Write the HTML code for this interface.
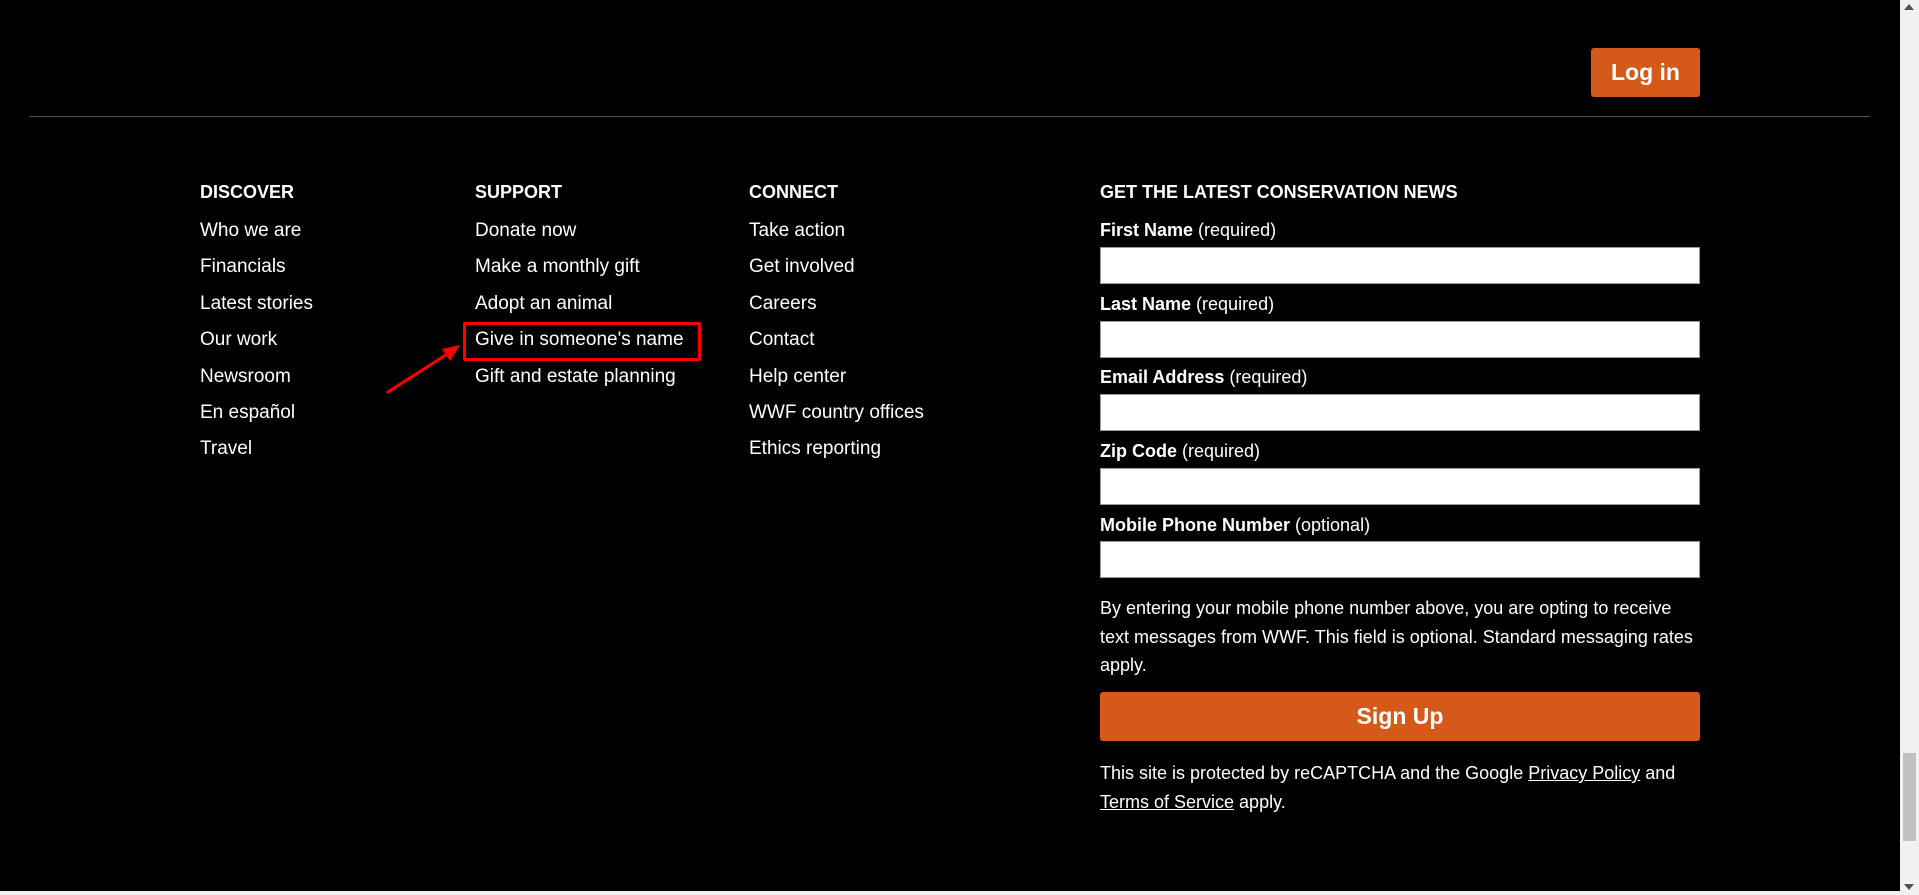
<!DOCTYPE html>
<html><head><meta charset="utf-8"><style>
*{margin:0;padding:0;box-sizing:border-box}
html,body{width:1919px;height:895px;overflow:hidden;background:#000;font-family:"Liberation Sans",Arial,sans-serif;color:#fff}
.a{position:absolute;white-space:nowrap}
.h{font-weight:bold;font-size:18px}
.l{font-size:19px}
.in{position:absolute;left:1100px;width:600px;background:#fff;border:1px solid #999}
.lab{font-size:18px}
.lab b{font-weight:bold}
</style></head><body>
<div class="a" style="left:1591px;top:48px;width:109px;height:49px;background:#d55a1a;border-radius:3px;font-weight:bold;font-size:23px;line-height:49px;text-align:center">Log in</div>
<div class="a" style="left:29px;top:116px;width:1841px;height:1px;background:#555"></div>

<div class="a h" style="left:200px;top:182px">DISCOVER</div>
<div class="a h" style="left:475px;top:182px">SUPPORT</div>
<div class="a h" style="left:749px;top:182px">CONNECT</div>
<div class="a h" style="left:1100px;top:182px">GET THE LATEST CONSERVATION NEWS</div>

<div class="a l" style="left:200px;top:220px">Who we are</div>
<div class="a l" style="left:200px;top:256px">Financials</div>
<div class="a l" style="left:200px;top:293px">Latest stories</div>
<div class="a l" style="left:200px;top:329px">Our work</div>
<div class="a l" style="left:200px;top:366px">Newsroom</div>
<div class="a l" style="left:200px;top:402px">En español</div>
<div class="a l" style="left:200px;top:438px">Travel</div>

<div class="a l" style="left:475px;top:220px">Donate now</div>
<div class="a l" style="left:475px;top:256px">Make a monthly gift</div>
<div class="a l" style="left:475px;top:293px">Adopt an animal</div>
<div class="a l" style="left:475px;top:329px">Give in someone's name</div>
<div class="a l" style="left:475px;top:366px">Gift and estate planning</div>

<div class="a l" style="left:749px;top:220px">Take action</div>
<div class="a l" style="left:749px;top:256px">Get involved</div>
<div class="a l" style="left:749px;top:293px">Careers</div>
<div class="a l" style="left:749px;top:329px">Contact</div>
<div class="a l" style="left:749px;top:366px">Help center</div>
<div class="a l" style="left:749px;top:402px">WWF country offices</div>
<div class="a l" style="left:749px;top:438px">Ethics reporting</div>

<div class="a" style="left:463px;top:322px;width:238px;height:39px;border:3px solid #f00;border-radius:2px"></div>
<svg class="a" style="left:380px;top:335px" width="90" height="65"><line x1="8" y1="57" x2="72" y2="16" stroke="#f00" stroke-width="3" stroke-linecap="round"/><polygon points="80,10 62,14 70,26" fill="#f00"/></svg>

<div class="a lab" style="left:1100px;top:220px"><b>First Name</b> (required)</div>
<div class="in" style="top:247px;height:37px"></div>
<div class="a lab" style="left:1100px;top:294px"><b>Last Name</b> (required)</div>
<div class="in" style="top:321px;height:37px"></div>
<div class="a lab" style="left:1100px;top:367px"><b>Email Address</b> (required)</div>
<div class="in" style="top:394px;height:37px"></div>
<div class="a lab" style="left:1100px;top:441px"><b>Zip Code</b> (required)</div>
<div class="in" style="top:468px;height:37px"></div>
<div class="a lab" style="left:1100px;top:515px"><b>Mobile Phone Number</b> (optional)</div>
<div class="in" style="top:541px;height:37px"></div>

<div class="a" style="left:1100px;top:594px;font-size:18px;line-height:28.5px;white-space:nowrap">By entering your mobile phone number above, you are opting to receive<br>text messages from WWF. This field is optional. Standard messaging rates<br>apply.</div>

<div class="a" style="left:1100px;top:692px;width:600px;height:49px;background:#d55a1a;border-radius:3px;font-weight:bold;font-size:23px;line-height:49px;text-align:center">Sign Up</div>

<div class="a" style="left:1100px;top:759px;font-size:18px;line-height:28.5px">This site is protected by reCAPTCHA and the Google <u>Privacy Policy</u> and<br><u>Terms of Service</u> apply.</div>

<div class="a" style="left:1900px;top:0;width:19px;height:895px;background:#f1f1f1"></div>
<div class="a" style="left:1903px;top:753px;width:13px;height:88px;background:#c1c1c1"></div>
<div class="a" style="left:1904px;top:4px;width:0;height:0;border-left:5px solid transparent;border-right:5px solid transparent;border-bottom:6px solid #505050"></div>
<div class="a" style="left:1904px;top:884px;width:0;height:0;border-left:5px solid transparent;border-right:5px solid transparent;border-top:6px solid #505050"></div>
<div class="a" style="left:0;top:891px;width:1900px;height:4px;background:#f1f1f1"></div>
</body></html>
